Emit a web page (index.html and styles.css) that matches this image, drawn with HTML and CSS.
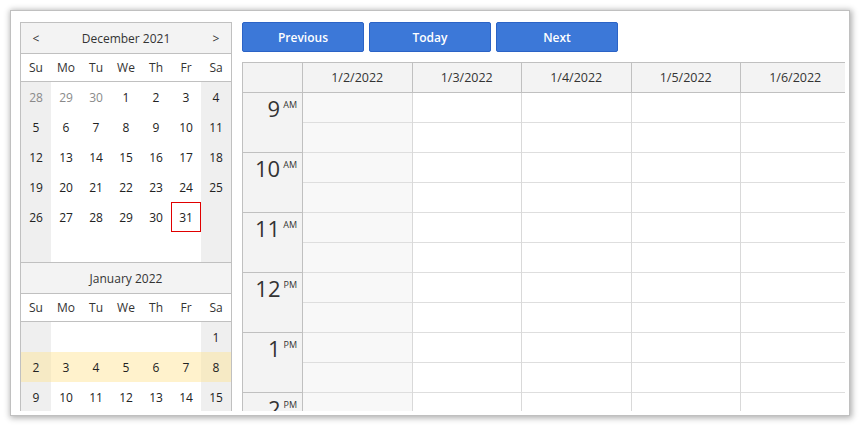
FILE: index.html
```html
<!DOCTYPE html>
<html>
<head>
<meta charset="utf-8">
<link rel="stylesheet" href="styles.css">
</head>
<body>
<div class="window">
  <div class="clip">
    <div class="nav">
      <div class="month">
        <div class="mhead"><span class="arrow">&lt;</span><span class="mtitle">December 2021</span><span class="arrow">&gt;</span></div>
        <div class="dnames"><span>Su</span><span>Mo</span><span>Tu</span><span>We</span><span>Th</span><span>Fr</span><span>Sa</span></div>
        <div class="days">
          <span class="we om">28</span><span class="om">29</span><span class="om">30</span><span>1</span><span>2</span><span>3</span><span class="we">4</span>
          <span class="we">5</span><span>6</span><span>7</span><span>8</span><span>9</span><span>10</span><span class="we">11</span>
          <span class="we">12</span><span>13</span><span>14</span><span>15</span><span>16</span><span>17</span><span class="we">18</span>
          <span class="we">19</span><span>20</span><span>21</span><span>22</span><span>23</span><span>24</span><span class="we">25</span>
          <span class="we">26</span><span>27</span><span>28</span><span>29</span><span>30</span><span class="today">31</span><span class="we"></span>
          <span class="we"></span><span></span><span></span><span></span><span></span><span></span><span class="we"></span>
        </div>
      </div>
      <div class="month">
        <div class="mhead"><span class="arrow"></span><span class="mtitle">January 2022</span><span class="arrow"></span></div>
        <div class="dnames"><span>Su</span><span>Mo</span><span>Tu</span><span>We</span><span>Th</span><span>Fr</span><span>Sa</span></div>
        <div class="days">
          <span class="we"></span><span></span><span></span><span></span><span></span><span></span><span class="we">1</span>
          <span class="we sel">2</span><span class="sel">3</span><span class="sel">4</span><span class="sel">5</span><span class="sel">6</span><span class="sel">7</span><span class="we sel">8</span>
          <span class="we">9</span><span>10</span><span>11</span><span>12</span><span>13</span><span>14</span><span class="we">15</span>
        </div>
      </div>
    </div>
    <div class="main">
      <div class="toolbar">
        <button class="btn">Previous</button>
        <button class="btn">Today</button>
        <button class="btn">Next</button>
      </div>
      <div class="cal">
        <div class="chead">
          <div class="corner"></div>
          <div class="colh">1/2/2022</div>
          <div class="colh">1/3/2022</div>
          <div class="colh">1/4/2022</div>
          <div class="colh">1/5/2022</div>
          <div class="colh">1/6/2022</div>
        </div>
        <div class="cbody">
          <div class="times">
            <div class="hour"><span class="h">9</span><span class="ap">AM</span></div>
            <div class="hour"><span class="h">10</span><span class="ap">AM</span></div>
            <div class="hour"><span class="h">11</span><span class="ap">AM</span></div>
            <div class="hour"><span class="h">12</span><span class="ap">PM</span></div>
            <div class="hour"><span class="h">1</span><span class="ap">PM</span></div>
            <div class="hour"><span class="h">2</span><span class="ap">PM</span></div>
          </div>
          <div class="col weekend">
            <div class="c"></div><div class="c"></div><div class="c"></div><div class="c"></div><div class="c"></div><div class="c"></div><div class="c"></div><div class="c"></div><div class="c"></div><div class="c"></div><div class="c"></div><div class="c"></div>
          </div>
          <div class="col">
            <div class="c"></div><div class="c"></div><div class="c"></div><div class="c"></div><div class="c"></div><div class="c"></div><div class="c"></div><div class="c"></div><div class="c"></div><div class="c"></div><div class="c"></div><div class="c"></div>
          </div>
          <div class="col">
            <div class="c"></div><div class="c"></div><div class="c"></div><div class="c"></div><div class="c"></div><div class="c"></div><div class="c"></div><div class="c"></div><div class="c"></div><div class="c"></div><div class="c"></div><div class="c"></div>
          </div>
          <div class="col">
            <div class="c"></div><div class="c"></div><div class="c"></div><div class="c"></div><div class="c"></div><div class="c"></div><div class="c"></div><div class="c"></div><div class="c"></div><div class="c"></div><div class="c"></div><div class="c"></div>
          </div>
          <div class="col">
            <div class="c"></div><div class="c"></div><div class="c"></div><div class="c"></div><div class="c"></div><div class="c"></div><div class="c"></div><div class="c"></div><div class="c"></div><div class="c"></div><div class="c"></div><div class="c"></div>
          </div>
        </div>
      </div>
    </div>
  </div>
</div>
</body>
</html>
```
FILE: styles.css
```css
* { box-sizing: border-box; }
html, body { margin: 0; padding: 0; background: #fff; }
body {
  padding: 10px;
  font-family: "Open Sans", "Noto Sans", "DejaVu Sans", sans-serif;
  font-size: 12px;
  color: #333;
}
.window {
  width: 840px;
  height: 406px;
  background: #fff;
  border: 1px solid #c0c0c0;
  box-shadow: 1px 1px 6px 1px rgba(0,0,0,0.32);
}
.clip {
  height: 400px;
  overflow: hidden;
  padding: 11px 0 0 9px;
  display: flex;
  gap: 10px;
  align-items: flex-start;
}
.nav {
  width: 212px;
  flex: none;
  border-left: 1px solid #c0c0c0;
  border-right: 1px solid #c0c0c0;
}
.month { border-top: 1px solid #c0c0c0; }
.mhead {
  height: 31px;
  background: #f3f3f3;
  border-bottom: 1px solid #c0c0c0;
  display: flex;
  align-items: center;
}
.arrow { width: 30px; text-align: center; }
.mtitle { flex: 1; text-align: center; }
.dnames {
  height: 28px;
  border-bottom: 1px solid #c0c0c0;
  display: grid;
  grid-template-columns: repeat(7, 30px);
  align-items: center;
}
.dnames span { text-align: center; }
.days {
  display: grid;
  grid-template-columns: repeat(7, 30px);
  grid-auto-rows: 30px;
}
.days span {
  display: flex;
  align-items: center;
  justify-content: center;
  color: #222;
}
.days .we { background: #efefef; }
.days .om { color: #8a8a8a; }
.days .sel { background: #fff2cc; }
.days .we.sel { background: #f6eac5; }
.days .today { border: 1px solid #e00000; }

.main { flex: none; width: 603px; }
.toolbar { display: flex; gap: 5px; height: 30px; margin-bottom: 10px; }
.btn {
  width: 122px;
  height: 30px;
  background: #3c78d8;
  border: 1px solid #2b63c6;
  border-radius: 2px;
  color: #fff;
  font-family: "Open Sans", "Noto Sans", sans-serif;
  font-weight: 600;
  font-size: 12px;
  padding: 0;
}
.cal {
  width: 603px;
  overflow: hidden;
  border-top: 1px solid #c0c0c0;
  border-left: 1px solid #c0c0c0;
}
.chead { display: flex; width: 700px; }
.corner, .colh {
  height: 30px;
  background: #f3f3f3;
  border-right: 1px solid #c0c0c0;
  border-bottom: 1px solid #c0c0c0;
  flex: none;
}
.corner { width: 60px; }
.colh {
  width: 109.5px;
  display: flex;
  align-items: center;
  justify-content: center;
  font-size: 12.5px;
}
.cbody { display: flex; width: 700px; }
.times { width: 60px; flex: none; }
.hour {
  height: 60px;
  background: #f3f3f3;
  border-right: 1px solid #c0c0c0;
  border-bottom: 1px solid #c0c0c0;
  display: flex;
  justify-content: flex-end;
  align-items: flex-start;
  padding-right: 5px;
}
.h { font-size: 22px; line-height: 30px; color: #333; }
.ap { font-size: 9px; line-height: 12px; margin-top: 6px; margin-left: 3px; color: #333; }
.col { width: 109.5px; flex: none; border-right: 1px solid #d9d9d9; }
.col.weekend { background: #f8f8f8; }
.c { height: 30px; border-bottom: 1px solid #dedede; }
```
